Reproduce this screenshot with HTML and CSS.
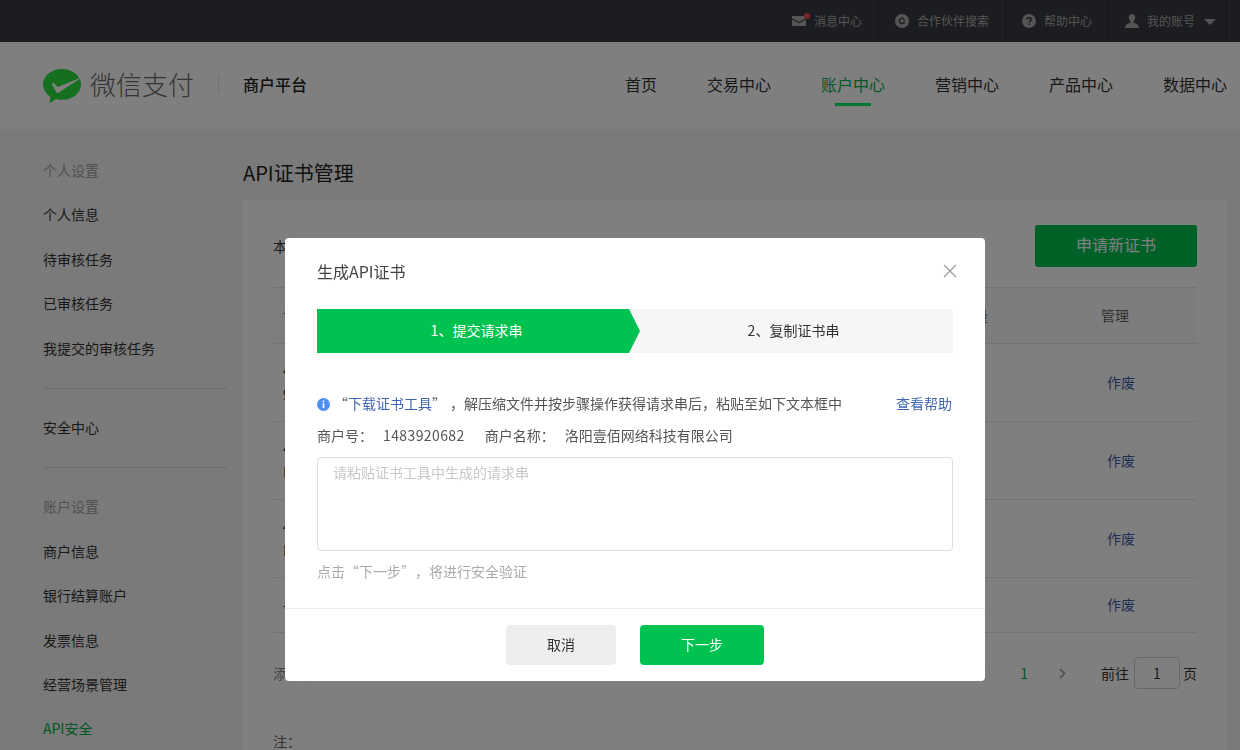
FILE: index.html
```html
<!DOCTYPE html>
<html lang="zh-CN">
<head>
<meta charset="utf-8">
<title>API证书管理</title>
<link rel="stylesheet" href="styles.css">
</head>
<body>
<div class="topbar">
  <a class="top-item">
    <span class="top-icon mail-wrap">
      <svg width="14" height="10" viewBox="0 0 14 10"><path class="ic" d="M0 0h14v2.2L7 6 0 2.2z"/><path class="ic" d="M0 3.4 7 7.2l7-3.8V10H0z"/></svg>
      <i class="dot"></i>
    </span>
    <span>消息中心</span>
  </a>
  <a class="top-item">
    <svg class="top-icon" width="14" height="14" viewBox="0 0 14 14"><path class="ic" fill-rule="evenodd" d="M7 0a7 7 0 1 1 0 14A7 7 0 0 1 7 0zm0 3.6a3.3 3.3 0 1 0 1.7 6.1l1.2.6-.5-1.7A3.3 3.3 0 0 0 7 3.6zm0 1.4a1.9 1.9 0 1 1 0 3.8A1.9 1.9 0 0 1 7 5z"/></svg>
    <span>合作伙伴搜索</span>
  </a>
  <a class="top-item">
    <svg class="top-icon" width="14" height="14" viewBox="0 0 14 14"><circle class="ic" cx="7" cy="7" r="7"/><path class="qm" d="M4.9 5.4C5 4.2 5.9 3.6 7 3.6c1.200 0 2.100.7 2.100 1.800 0 1.500-1.800 1.500-1.800 3"/><circle class="qd" cx="7.300" cy="10.300" r=".9"/></svg>
    <span>帮助中心</span>
  </a>
  <a class="top-item">
    <svg class="top-icon" width="14" height="14" viewBox="0 0 14 14"><path class="ic" d="M7 0c2 0 3.200 1.500 3.200 3.600 0 1.500-.7 2.900-1.600 3.700v1.500c1.700.7 5.400 1.300 5.400 5.200H0c0-3.900 3.700-4.500 5.400-5.200V7.300C4.500 6.500 3.800 5.100 3.800 3.600 3.800 1.500 5 0 7 0z"/></svg>
    <span>我的账号</span>
    <i class="caret"></i>
  </a>
</div>

<header class="header">
  <div class="brand">
    <svg class="logo" width="38" height="35" viewBox="0 0 38 35"><path class="logo-bubble" d="M19 0c10.500 0 19 6.900 19 15.400S29.500 30.800 19 30.800c-2.200 0-4.300-.3-6.200-.9L6.500 34.500l.8-7.100C2.800 24.600 0 20.300 0 15.400 0 6.900 8.500 0 19 0z"/><path class="logo-check" d="M8.800 14.800l1.700-1 4.300 4.300L36.600 9c.5 0 .6.500.3.800L15.500 23.700c-.7.400-1.500.200-2-.3z"/></svg>
    <span class="brand-name">微信支付</span>
    <i class="brand-sep"></i>
    <span class="brand-sub">商户平台</span>
  </div>
  <nav class="nav">
    <a class="nav-link">首页</a>
    <a class="nav-link">交易中心</a>
    <a class="nav-link is-active">账户中心</a>
    <a class="nav-link">营销中心</a>
    <a class="nav-link">产品中心</a>
    <a class="nav-link">数据中心</a>
  </nav>
</header>

<div class="layout">
  <aside class="sidebar">
    <div class="side-title">个人设置</div>
    <a class="side-link">个人信息</a>
    <a class="side-link">待审核任务</a>
    <a class="side-link">已审核任务</a>
    <a class="side-link">我提交的审核任务</a>
    <hr class="side-rule">
    <a class="side-link">安全中心</a>
    <hr class="side-rule">
    <div class="side-title">账户设置</div>
    <a class="side-link">商户信息</a>
    <a class="side-link">银行结算账户</a>
    <a class="side-link">发票信息</a>
    <a class="side-link">经营场景管理</a>
    <a class="side-link is-active">API安全</a>
  </aside>
  <main class="main">
    <h1 class="page-title">API证书管理</h1>
    <section class="card">
      <div class="card-top">
        <span>本商户号已申请的证书</span>
        <a class="apply-btn">申请新证书</a>
      </div>
      <div class="row row-head">
        <div class="col-a">证书序列号</div><div class="col-b">数量</div><div></div><div>管理</div>
      </div>
      <div class="row row-tall">
        <div class="col-a">4A2F7C91D03B6E58<br>9C14E07A</div><div></div><div></div><div class="col-act">作废</div>
      </div>
      <div class="row row-tall">
        <div class="col-a">4D18B3A6F27E0C95<br>I</div><div></div><div></div><div class="col-act">作废</div>
      </div>
      <div class="row row-tall">
        <div class="col-a">47E0C52D9A16B83F<br>I</div><div></div><div></div><div class="col-act">作废</div>
      </div>
      <div class="row row-short">
        <div class="col-a">—</div><div></div><div></div><div class="col-act">作废</div>
      </div>
      <div class="pager">
        <span class="pager-note">添加说明</span>
        <div class="pager-right">
          <svg class="chev" width="7" height="11" viewBox="0 0 7 11"><path d="M6 1 1.500 5.500 6 10"/></svg>
          <span class="page-num">1</span>
          <svg class="chev chev-next" width="7" height="11" viewBox="0 0 7 11"><path d="M1 1l4.500 4.500L1 10"/></svg>
          <span class="goto">前往</span>
          <span class="page-box">1</span>
          <span>页</span>
        </div>
      </div>
      <div class="note">注：</div>
    </section>
  </main>
</div>

<div class="overlay"></div>

<div class="modal">
  <div class="modal-head">
    <span class="modal-title">生成API证书</span>
    <svg class="close" width="14" height="14" viewBox="0 0 14 14"><path d="M1 1l12 12M13 1 1 13"/></svg>
  </div>
  <div class="modal-body">
    <div class="steps">
      <div class="step step-on">1、提交请求串</div>
      <div class="step step-off">2、复制证书串</div>
    </div>
    <div class="info">
      <svg class="info-icon" width="13" height="13" viewBox="0 0 13 13"><circle cx="6.500" cy="6.500" r="6.500"/><rect x="5.700" y="2.600" width="1.600" height="1.700"/><rect x="5.700" y="5.200" width="1.600" height="5"/></svg>
      <span class="info-text">“<a class="link">下载证书工具</a>”<span class="comma">，</span>解压缩文件并按步骤操作获得请求串后，粘贴至如下文本框中</span>
      <a class="link help">查看帮助</a>
    </div>
    <div class="merchant">
      <span>商户号：</span><span class="num">1483920682</span>
      <span class="m-name">商户名称：</span><span class="m-val">洛阳壹佰网络科技有限公司</span>
    </div>
    <textarea class="paste" placeholder="请粘贴证书工具中生成的请求串"></textarea>
    <p class="hint">点击“下一步”，将进行安全验证</p>
  </div>
  <div class="modal-foot">
    <a class="btn btn-cancel">取消</a>
    <a class="btn btn-next">下一步</a>
  </div>
</div>
</body>
</html>
```
FILE: styles.css
```css
* { box-sizing: border-box; }
html, body { height: 100%; overflow: hidden; }
body {
  margin: 0;
  background: #f5f5f5;
  color: #333;
  font-family: "Noto Sans CJK SC", "Noto Sans", sans-serif;
  font-size: 14px;
  line-height: 20px;
  text-spacing-trim: space-all;
}
a { color: inherit; text-decoration: none; }
i { display: block; font-style: normal; }

/* top bar */
.topbar {
  height: 42px;
  background: #393b42;
  display: flex;
  justify-content: flex-end;
  padding-right: 13px;
  color: #aaa;
  font-size: 12px;
}
.top-item {
  display: flex;
  align-items: center;
  padding: 0 16px;
  border-right: 1px solid #2a2b30;
}
.top-item:last-child { padding-right: 10px; }
.top-icon { display: block; margin-right: 8px; flex: none; }
.mail-wrap { position: relative; width: 14px; height: 10px; }
.mail-wrap svg { display: block; }
.dot {
  position: absolute;
  top: -3px;
  left: 12px;
  width: 6px;
  height: 6px;
  border-radius: 50%;
  background: #f0474b;
}
.ic { fill: #aaa; }
.qm { fill: none; stroke: #393b42; stroke-width: 1.600; }
.qd { fill: #393b42; }
.caret {
  margin-left: 9px;
  margin-top: 2px;
  border: 6px solid transparent;
  border-top: 6px solid #aaa;
  border-bottom: 0;
}

/* header */
.header {
  height: 87px;
  background: #fff;
  display: flex;
  align-items: center;
  justify-content: space-between;
  padding: 0 13px 4px 43px;
}
.brand { display: flex; align-items: center; }
.logo { display: block; margin: 5px 9px 0 0; }
.logo-bubble { fill: #28e03e; }
.logo-check { fill: #fff; }
.brand-name { font-size: 26px; line-height: 34px; color: #6a6a6a; font-weight: 300; width: 104px; }
.brand-sep { width: 1px; height: 18px; background: #e0e0e0; margin: 0 24px 0 24px; }
.brand-sub { font-size: 16px; font-weight: 500; color: #222; }
.nav { display: flex; gap: 50px; }
.nav-link {
  position: relative;
  font-size: 16px;
  line-height: 24px;
  color: #333;
}
.nav-link.is-active { color: #00b04a; }
.nav-link.is-active::after {
  content: "";
  position: absolute;
  left: 14px;
  right: 14px;
  bottom: -10px;
  height: 3px;
  background: #00ee60;
}

/* layout */
.layout { display: flex; padding: 0 13px 0 43px; gap: 16px; }
.sidebar { width: 184px; flex: none; padding-top: 19px; }
.side-title, .side-link { display: block; line-height: 44.400px; height: 44.400px; white-space: nowrap; }
.side-title { color: #a3a3a3; }
.side-link { color: #333; }
.side-link.is-active { color: #00b04a; }
.side-rule { border: 0; height: 1px; background: #d8d8d8; margin: 18px 0 16px; }
.main { flex: 1; min-width: 0; }
.page-title {
  margin: 0;
  padding-top: 30px;
  height: 71px;
  font-size: 20px;
  line-height: 28px;
  font-weight: 400;
  color: #222;
}
.card { background: #fff; padding: 25px 30px 0; height: 560px; }
.card-top {
  display: flex;
  align-items: center;
  justify-content: space-between;
  height: 42px;
  margin-bottom: 20px;
}
.apply-btn {
  width: 162px;
  height: 42px;
  border-radius: 3px;
  background: #00c250;
  color: #fff;
  font-size: 16px;
  line-height: 38px;
  text-align: center;
}
.row {
  display: grid;
  grid-template-columns: 655px 60px 113px 96px;
  align-items: center;
  border-bottom: 1px solid #e6e6e6;
}
.row-head { height: 57px; padding-bottom: 1px; background: #fafafa; border-top: 1px solid #e6e6e6; color: #666; }
.row-tall { height: 78px; padding-bottom: 2px; line-height: 24px; }
.row-short { height: 55px; padding-bottom: 2px; }
.col-a { padding-left: 10px; white-space: nowrap; overflow: hidden; }
.col-b { text-align: right; }
.col-act { padding-left: 6px; color: #3f5ea8; }
.pager {
  display: flex;
  justify-content: space-between;
  align-items: center;
  margin-top: 24px;
  height: 32px;
}
.pager-note { color: #888; }
.pager-right { display: flex; align-items: center; color: #333; }
.chev { display: block; fill: none; stroke: #999; stroke-width: 1.500; }
.page-num { margin-left: 34px; color: #00b04a; }
.chev-next { margin-left: 31px; }
.goto { margin-left: 35px; }
.page-box {
  width: 46px;
  height: 32px;
  margin: 0 3px 0 5px;
  border: 1px solid #d0d0d0;
  border-radius: 4px;
  line-height: 30px;
  text-align: center;
}
.note { margin-top: 44px; line-height: 16px; color: #666; }

/* overlay and dialog */
.overlay { position: fixed; inset: 0; background: rgba(0, 0, 0, .5); }
.modal {
  position: fixed;
  left: 285px;
  top: 238px;
  width: 700px;
  height: 443px;
  background: #fff;
  border-radius: 4px;
}
.modal-head {
  height: 71px;
  display: flex;
  align-items: center;
  justify-content: space-between;
  padding: 0 28px 0 32px;
}
.modal-title { font-size: 16px; color: #444; margin-bottom: 6px; }
.close { display: block; margin-bottom: 5px; fill: none; stroke: #999; stroke-width: 1.200; }
.modal-body { padding: 0 32px; height: 299px; }
.steps { display: flex; height: 44px; background: #f6f6f6; }
.step {
  flex: 1;
  line-height: 42px;
  text-align: center;
  color: #333;
}
.step-on {
  flex: 0 0 323px;
  height: 44px;
  padding-right: 4px;
  background: #00c250;
  color: #fff;
  clip-path: polygon(0 0, 312px 0, 100% 50%, 312px 100%, 0 100%);
}
.step-off { padding-right: 6px; }
.info { display: flex; align-items: center; margin-top: 40px; height: 20px; }
.info-icon { display: block; flex: none; margin: 2px 4px 0 0; fill: #4d8ef7; }
.info-icon rect { fill: #fff; }
.info-text { flex: 1; color: #555; white-space: nowrap; }
.comma { margin-left: 4px; }
.link { color: #3f66b3; }
.help { flex: none; margin-right: 1px; }
.merchant { display: flex; margin-top: 12px; color: #555; }
.num { margin-left: 10px; letter-spacing: .4px; }
.m-name { margin-left: 20px; }
.m-val { margin-left: 10px; }
.paste {
  display: block;
  width: 636px;
  height: 94px;
  margin: 12px 0 0;
  padding: 4px 15px;
  border: 1px solid #ddd;
  border-radius: 4px;
  resize: none;
  outline: 0;
  font: inherit;
  color: #333;
}
.paste::placeholder { color: #c8c8c8; opacity: 1; }
.hint { margin: 10px 0 0; color: #aaa; }
.modal-foot {
  display: flex;
  justify-content: center;
  gap: 24px;
  border-top: 1px solid #eee;
  padding-top: 16px;
}
.btn {
  height: 40px;
  border-radius: 4px;
  line-height: 38px;
  text-align: center;
}
.btn-cancel { width: 110px; background: #eee; color: #333; }
.btn-next { width: 124px; background: #00c250; color: #fff; }
```
